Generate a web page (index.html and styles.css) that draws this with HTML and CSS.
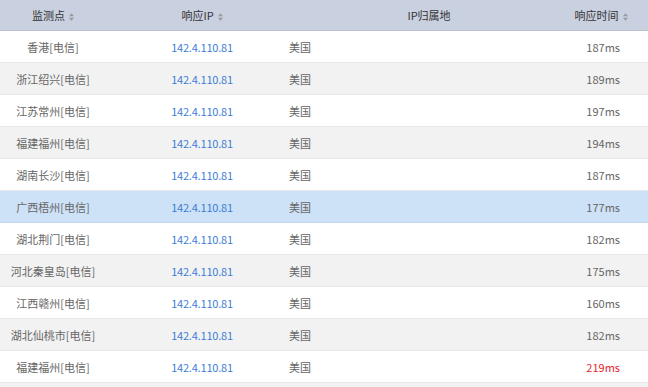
FILE: index.html
```html
<!DOCTYPE html>
<html lang="zh">
<head>
<meta charset="utf-8">
<link rel="stylesheet" href="styles.css">
</head>
<body>
<div class="table">
  <div class="row head">
    <div class="c1">监测点<svg class="sort" viewBox="0 0 6 9"><path d="M3 0L6 3.5H0Z M3 9L6 5.5H0Z"/></svg></div>
    <div class="c2">响应IP<svg class="sort" viewBox="0 0 6 9"><path d="M3 0L6 3.5H0Z M3 9L6 5.5H0Z"/></svg></div>
    <div class="c3">IP归属地</div>
    <div class="c4">响应时间<svg class="sort" viewBox="0 0 6 9"><path d="M3 0L6 3.5H0Z M3 9L6 5.5H0Z"/></svg></div>
  </div>
  <div class="row"><div class="c1">香港[电信]</div><div class="c2 ip">142.4.110.81</div><div class="c3">美国</div><div class="c4">187ms</div></div>
  <div class="row alt"><div class="c1">浙江绍兴[电信]</div><div class="c2 ip">142.4.110.81</div><div class="c3">美国</div><div class="c4">189ms</div></div>
  <div class="row"><div class="c1">江苏常州[电信]</div><div class="c2 ip">142.4.110.81</div><div class="c3">美国</div><div class="c4">197ms</div></div>
  <div class="row alt"><div class="c1">福建福州[电信]</div><div class="c2 ip">142.4.110.81</div><div class="c3">美国</div><div class="c4">194ms</div></div>
  <div class="row"><div class="c1">湖南长沙[电信]</div><div class="c2 ip">142.4.110.81</div><div class="c3">美国</div><div class="c4">187ms</div></div>
  <div class="row hl"><div class="c1">广西梧州[电信]</div><div class="c2 ip">142.4.110.81</div><div class="c3">美国</div><div class="c4">177ms</div></div>
  <div class="row"><div class="c1">湖北荆门[电信]</div><div class="c2 ip">142.4.110.81</div><div class="c3">美国</div><div class="c4">182ms</div></div>
  <div class="row alt"><div class="c1">河北秦皇岛[电信]</div><div class="c2 ip">142.4.110.81</div><div class="c3">美国</div><div class="c4">175ms</div></div>
  <div class="row"><div class="c1">江西赣州[电信]</div><div class="c2 ip">142.4.110.81</div><div class="c3">美国</div><div class="c4">160ms</div></div>
  <div class="row alt"><div class="c1">湖北仙桃市[电信]</div><div class="c2 ip">142.4.110.81</div><div class="c3">美国</div><div class="c4">182ms</div></div>
  <div class="row"><div class="c1">福建福州[电信]</div><div class="c2 ip">142.4.110.81</div><div class="c3">美国</div><div class="c4 slow">219ms</div></div>
</div>
</body>
</html>
```
FILE: styles.css
```css
html, body {
  margin: 0;
  padding: 0;
  background: #f2f2f2;
}
body {
  font-family: "Noto Sans CJK SC", "Noto Sans", sans-serif;
  font-size: 11px;
  color: #666;
  height: 387px;
  overflow: hidden;
}
.table {
  width: 648px;
}
.row {
  display: grid;
  grid-template-columns: 106px 176px 294px 72px;
  height: 31px;
  border-bottom: 1px solid #e8e8e8;
  background: #fff;
  align-items: center;
}
.row.alt {
  background: #f2f2f2;
}
.row.hl {
  background: #cde1f7;
  border-bottom-color: #c3d6ec;
}
.row.head {
  height: 30px;
  background: #c9d0e0;
  border-bottom: 1px solid #bcc3d3;
  color: #333;
}
.c1 {
  text-align: center;
}
.c2 {
  text-align: center;
  padding-left: 16px;
}
.ip {
  letter-spacing: -0.2px;
  color: #3a7ed4;
}
.c3 {
  padding-left: 7px;
}
.head .c3 {
  text-align: center;
  padding-left: 0;
}
.c4 {
  text-align: right;
  padding-right: 28px;
}
.head .c4 {
  text-align: center;
  padding-right: 0;
  margin-left: -22px;
}
.slow {
  color: #e8262d;
}
.sort {
  width: 5px;
  height: 8px;
  margin-left: 4px;
  fill: #999;
  vertical-align: -1px;
}
```
